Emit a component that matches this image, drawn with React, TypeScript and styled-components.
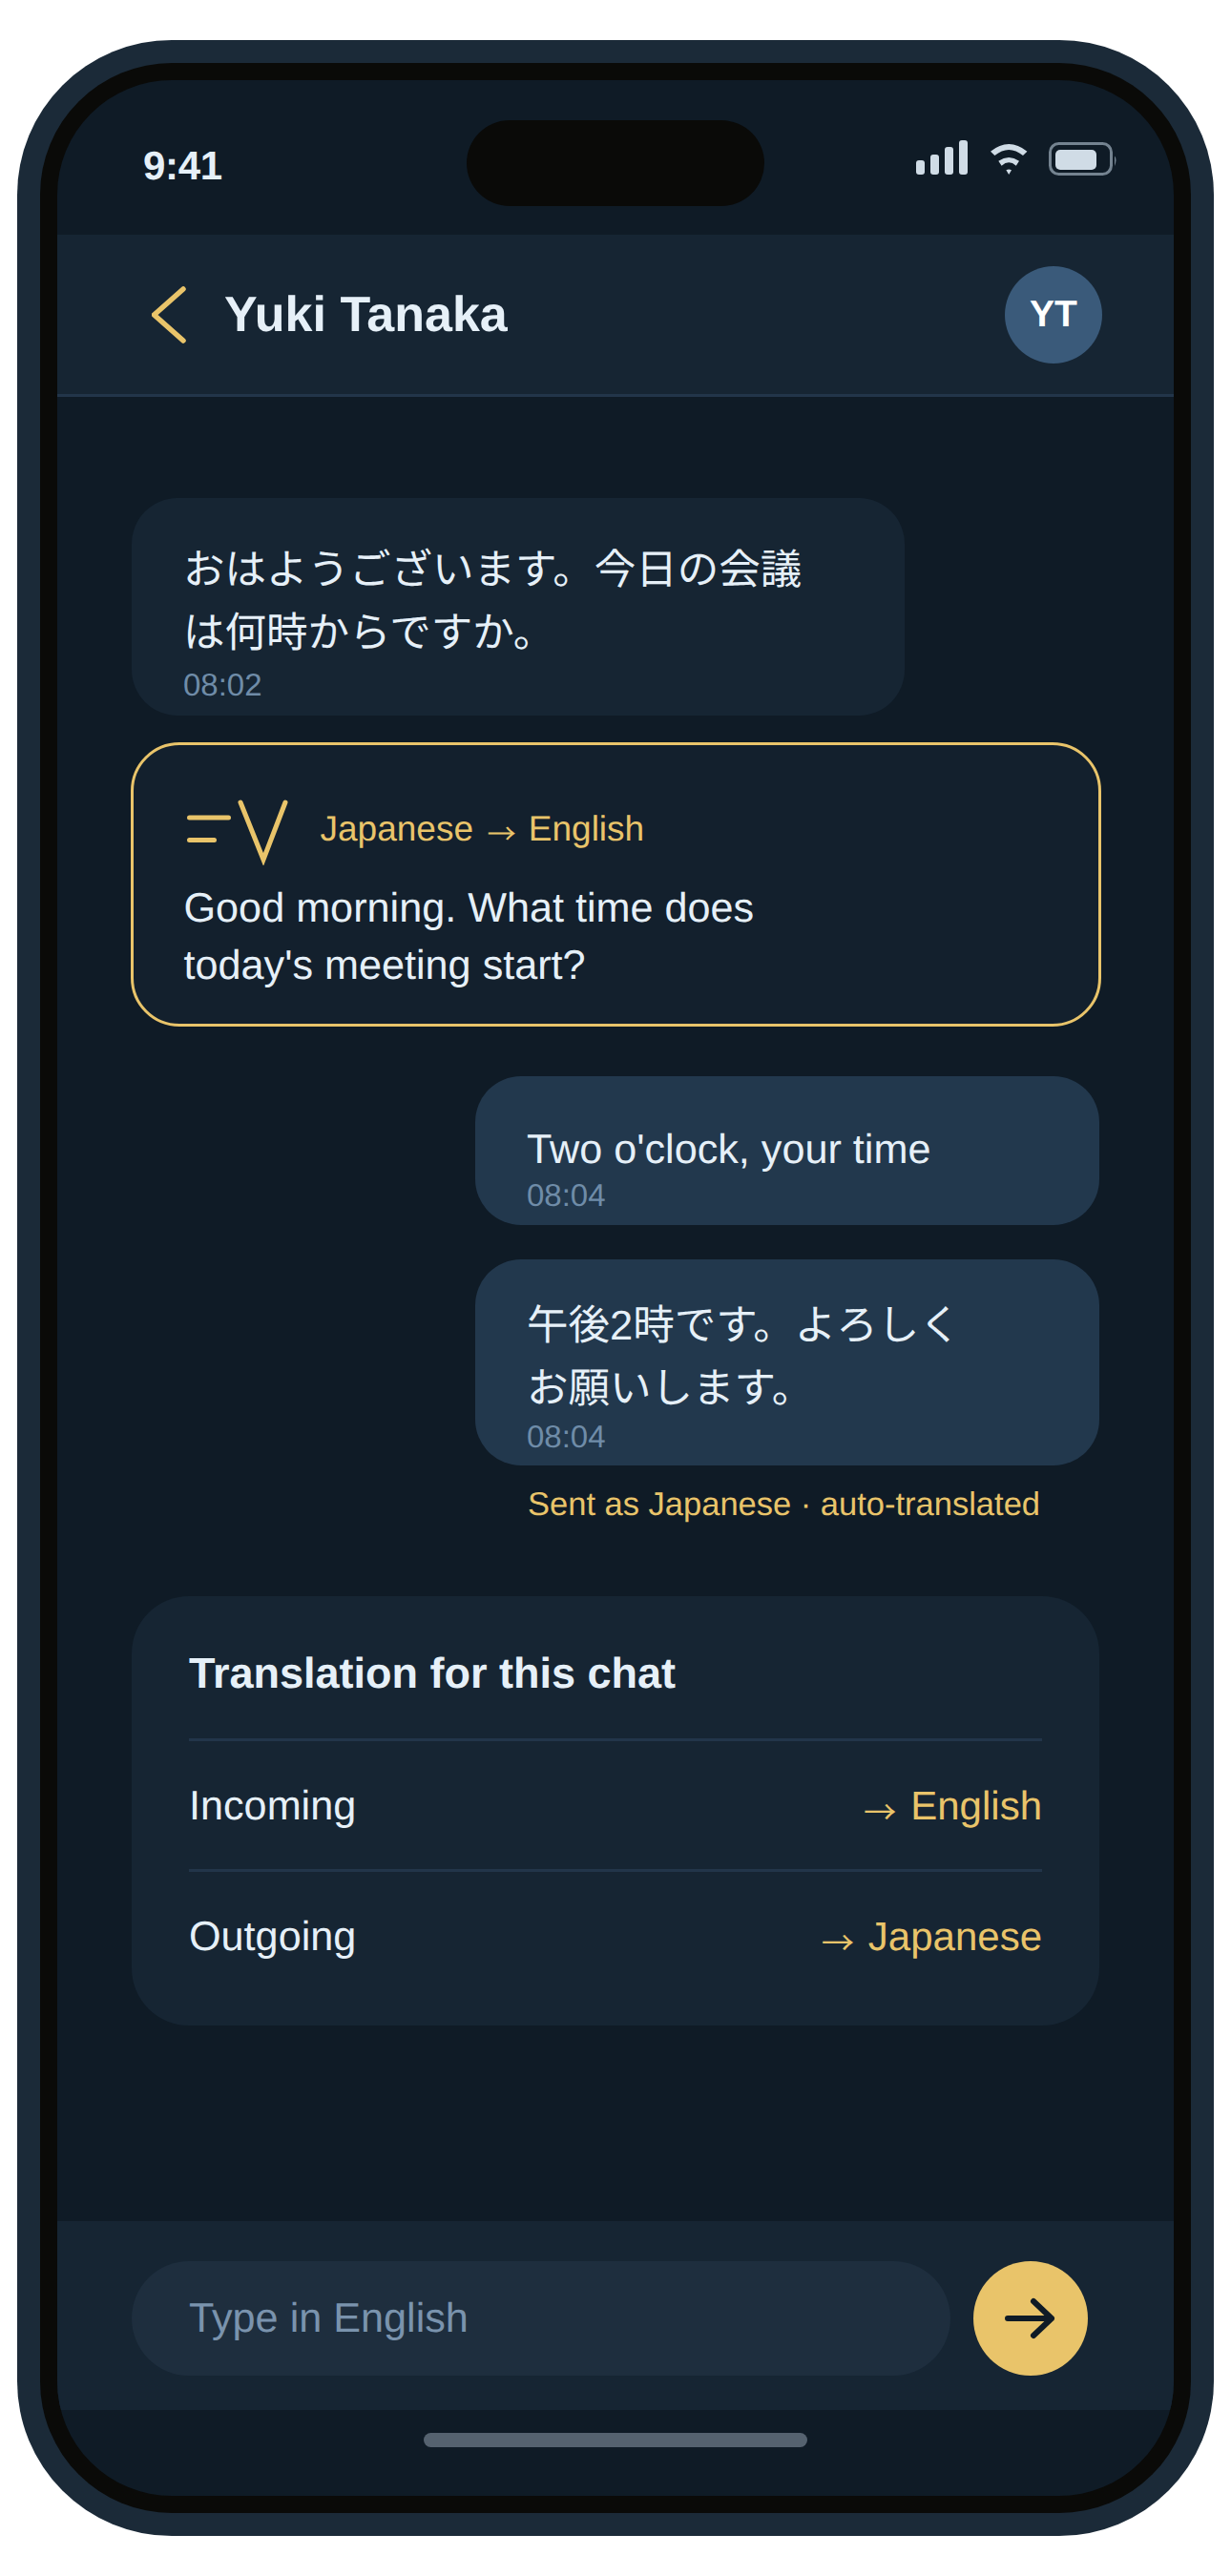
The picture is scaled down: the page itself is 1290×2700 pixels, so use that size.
import styled, { createGlobalStyle } from 'styled-components';

const GOLD = '#e9c46a';
const INK = '#e6f0f8';
const MUTED = '#6f8ca8';

const GlobalStyle = createGlobalStyle`
	html,
	body {
		margin: 0;
		padding: 0;
		background: #ffffff;
	}

	body {
		font-family: 'Liberation Sans', 'Noto Sans CJK JP', sans-serif;
		text-rendering: geometricPrecision;
	}
`;

const Page = styled.div`
	display: flex;
	justify-content: center;
	padding-top: 42px;
	height: 2658px;
`;

const Bezel = styled.div`
	width: 1254px;
	height: 2616px;
	box-sizing: border-box;
	padding: 24px;
	border-radius: 162px;
	background: #1b2a38;
`;

const Rim = styled.div`
	height: 100%;
	box-sizing: border-box;
	padding: 18px;
	border-radius: 138px;
	background: #0a0a08;
`;

const Screen = styled.div`
	position: relative;
	display: flex;
	flex-direction: column;
	height: 100%;
	border-radius: 120px;
	overflow: hidden;
	background: #0f1b26;
	color: ${INK};
`;

const Island = styled.div`
	position: absolute;
	top: 42px;
	left: 429px;
	width: 312px;
	height: 90px;
	border-radius: 45px;
	background: #0a0a08;
`;

const StatusBar = styled.div`
	display: flex;
	justify-content: space-between;
	align-items: flex-start;
	height: 162px;
	box-sizing: border-box;
	padding: 63px 59px 0 90px;
	flex-shrink: 0;
`;

const Time = styled.div`
	padding-top: 3px;
	font-size: 42px;
	line-height: 48px;
	font-weight: 700;
	letter-spacing: -0.3px;
`;

const StatusIcons = styled.div`
	display: flex;
	align-items: flex-start;
`;

const SignalIcon = styled.svg`
	display: block;
	width: 54px;
	height: 36px;
	margin-right: 24px;
`;

const WifiIcon = styled.svg`
	display: block;
	width: 39px;
	height: 33px;
	margin: 4px 22px 0 0;
`;

const BatteryIcon = styled.svg`
	display: block;
	width: 72px;
	height: 36px;
	margin-top: 2px;
`;

const Header = styled.header`
	display: flex;
	align-items: center;
	height: 170px;
	box-sizing: border-box;
	padding: 0 75px 0 99px;
	border-bottom: 3px solid #22354a;
	background: #162533;
	flex-shrink: 0;
`;

const BackIcon = styled.svg`
	display: block;
	width: 36px;
	height: 60px;
	margin-right: 40px;
`;

const Title = styled.h1`
	flex: 1;
	margin: 0;
	font-size: 52px;
	line-height: 60px;
	font-weight: 700;
`;

const Avatar = styled.div`
	display: flex;
	align-items: center;
	justify-content: center;
	width: 102px;
	height: 102px;
	border-radius: 50%;
	background: #3a5a7a;
	color: #ffffff;
	font-size: 39px;
	font-weight: 700;
`;

const Thread = styled.main`
	flex: 1;
	display: flex;
	flex-direction: column;
	padding: 106px 78px 0;
`;

const Bubble = styled.div<{ $sent?: boolean; $top: number; $gap: number; $bottom: number }>`
	box-sizing: border-box;
	align-self: ${({ $sent }) => ($sent ? 'flex-end' : 'flex-start')};
	width: ${({ $sent }) => ($sent ? '654px' : '810px')};
	margin-top: ${({ $gap }) => $gap}px;
	padding: ${({ $top }) => $top}px 54px ${({ $bottom }) => $bottom}px;
	border-radius: 48px;
	background: ${({ $sent }) => ($sent ? '#22384d' : '#162533')};
`;

const BubbleText = styled.div<{ $latin?: boolean }>`
	font-size: ${({ $latin }) => ($latin ? '43.2px' : '43.5px')};
	line-height: 66px;
`;

const Stamp = styled.div<{ $gap: number }>`
	margin-top: ${({ $gap }) => $gap}px;
	color: ${MUTED};
	font-size: 33px;
	line-height: 33px;
`;

const TranslationCard = styled.div`
	box-sizing: border-box;
	height: 298px;
	margin: 28px -1.5px 0;
	padding: 54px 53px 0;
	border: 3px solid ${GOLD};
	border-radius: 51px;
	background: #13202d;
`;

const TranslationHead = styled.div`
	display: flex;
	align-items: center;
	height: 72px;
	color: ${GOLD};
	font-size: 37px;
	line-height: 42px;
`;

const TranslateIcon = styled.svg`
	display: block;
	width: 112px;
	height: 72px;
	margin-right: 31px;
`;

const HeadLabel = styled.span`
	padding-bottom: 4px;
`;

const Arrow = styled.span`
	margin: 0 0.09em 0 0.14em;
	font-family: 'Noto Sans CJK JP', sans-serif;
	font-size: 0.82em;
	line-height: 0;
	vertical-align: -0.14em;
`;

const TranslationText = styled.div`
	margin-top: 15px;
	font-size: 43.2px;
	line-height: 60px;
`;

const SentNote = styled.div`
	margin-top: 21px;
	align-self: flex-end;
	width: 599px;
	color: ${GOLD};
	font-size: 34.5px;
	line-height: 40px;
`;

const SettingsCard = styled.section`
	margin-top: 76px;
	padding: 0 60px;
	height: 450px;
	box-sizing: border-box;
	border-radius: 60px;
	background: #162533;
`;

const SettingsTitle = styled.div`
	display: flex;
	align-items: center;
	height: 152px;
	box-sizing: border-box;
	padding-top: 12px;
	border-bottom: 3px solid #22354a;
	font-size: 45px;
	font-weight: 700;
`;

const SettingsRow = styled.div<{ $last?: boolean }>`
	display: flex;
	justify-content: space-between;
	align-items: center;
	height: 132px;
	padding-top: 2px;
	font-size: 43.2px;
	border-bottom: ${({ $last }) => ($last ? 'none' : '3px solid #22354a')};
`;

const RowValue = styled.span`
	color: ${GOLD};
	font-size: 42px;
`;

const Composer = styled.div`
	display: flex;
	align-items: flex-start;
	gap: 24px;
	height: 198px;
	box-sizing: border-box;
	padding: 42px 90px 0 78px;
	background: #162533;
	flex-shrink: 0;
`;

const Field = styled.div`
	flex: 1;
	display: flex;
	align-items: center;
	height: 120px;
	padding-left: 60px;
	border-radius: 60px;
	background: #1e2e3e;
	color: #7a93ad;
	font-size: 43.2px;
`;

const SendButton = styled.button`
	display: flex;
	align-items: center;
	justify-content: center;
	width: 120px;
	height: 120px;
	padding: 0;
	border: 0;
	border-radius: 50%;
	background: ${GOLD};
`;

const HomeArea = styled.div`
	display: flex;
	justify-content: center;
	height: 90px;
	padding-top: 24px;
	box-sizing: border-box;
	flex-shrink: 0;
`;

const HomeBar = styled.div`
	width: 402px;
	height: 15px;
	border-radius: 7.5px;
	background: #55626f;
`;

const signalBars = [15, 21, 29, 36];

export default function App() {
	return (
		<>
			<GlobalStyle />
			<Page>
				<Bezel>
					<Rim>
						<Screen>
							<Island />
							<StatusBar>
								<Time>9:41</Time>
								<StatusIcons>
									<SignalIcon viewBox="0 0 54 36">
										{signalBars.map((h, i) => (
											<rect key={h} x={i * 15} y={36 - h} width="9" height={h} rx="3" fill="#d0dce6" />
										))}
									</SignalIcon>
									<WifiIcon viewBox="0 0 39 33">
										<path d="M0 7.7Q19.2 -7.7 38.4 7.7L34 12Q19.2 0 4.4 12Z" fill="#d0dce6" />
										<path d="M8.3 17.7Q19.2 10.3 30 17.7L26.8 22.7Q19.2 15.9 11.6 22.7Z" fill="#d0dce6" />
										<path d="M16.4 27.2Q19.2 25.8 22 27.2L19.2 32Z" fill="#d0dce6" />
									</WifiIcon>
									<BatteryIcon viewBox="0 0 72 36">
										<rect x="1.5" y="1.5" width="64" height="32" rx="9" fill="none" stroke="#748390" strokeWidth="3" />
										<rect x="7" y="8" width="43" height="21" rx="5" fill="#d0dce6" />
										<path d="M69 14.5Q72 17.5 69 25Z" fill="#748390" />
									</BatteryIcon>
								</StatusIcons>
							</StatusBar>
							<Header>
								<BackIcon viewBox="0 0 36 60">
									<path
										d="M33 3L2.5 30L33 57"
										fill="none"
										stroke={GOLD}
										strokeWidth="5.5"
										strokeLinecap="round"
										strokeLinejoin="round"
									/>
								</BackIcon>
								<Title>Yuki Tanaka</Title>
								<Avatar>YT</Avatar>
							</Header>
							<Thread>
								<Bubble $top={43} $gap={0} $bottom={16}>
									<BubbleText>
										おはようございます。今日の会議
										<br />
										は何時からですか。
									</BubbleText>
									<Stamp $gap={4}>08:02</Stamp>
								</Bubble>
								<TranslationCard>
									<TranslationHead>
										<TranslateIcon viewBox="0 0 112 72">
											<path
												d="M5.5 22H46.5M5.5 45.5H31.5M59 6L83 66L106 6"
												fill="none"
												stroke={GOLD}
												strokeWidth="5"
												strokeLinecap="round"
											/>
										</TranslateIcon>
										<HeadLabel>
											Japanese <Arrow>→</Arrow> English
										</HeadLabel>
									</TranslationHead>
									<TranslationText>
										Good morning. What time does
										<br />
										today's meeting start?
									</TranslationText>
								</TranslationCard>
								<Bubble $sent $top={44} $gap={52} $bottom={15}>
									<BubbleText $latin>Two o'clock, your time</BubbleText>
									<Stamp $gap={-2}>08:04</Stamp>
								</Bubble>
								<Bubble $sent $top={37} $gap={36} $bottom={14}>
									<BubbleText>
										午後2時です。よろしく
										<br />
										お願いします。
									</BubbleText>
									<Stamp $gap={0}>08:04</Stamp>
								</Bubble>
								<SentNote>Sent as Japanese · auto-translated</SentNote>
								<SettingsCard>
									<SettingsTitle>Translation for this chat</SettingsTitle>
									<SettingsRow>
										Incoming
										<RowValue>
											<Arrow>→</Arrow> English
										</RowValue>
									</SettingsRow>
									<SettingsRow $last>
										Outgoing
										<RowValue>
											<Arrow>→</Arrow> Japanese
										</RowValue>
									</SettingsRow>
								</SettingsCard>
							</Thread>
							<Composer>
								<Field>Type in English</Field>
								<SendButton aria-label="Send">
									<svg width="60" height="60" viewBox="0 0 60 60" fill="none">
										<path
											d="M6 30H52M33 12L52 30L33 48"
											stroke="#0f1b26"
											strokeWidth="6"
											strokeLinecap="round"
											strokeLinejoin="round"
										/>
									</svg>
								</SendButton>
							</Composer>
							<HomeArea>
								<HomeBar />
							</HomeArea>
						</Screen>
					</Rim>
				</Bezel>
			</Page>
		</>
	);
}
